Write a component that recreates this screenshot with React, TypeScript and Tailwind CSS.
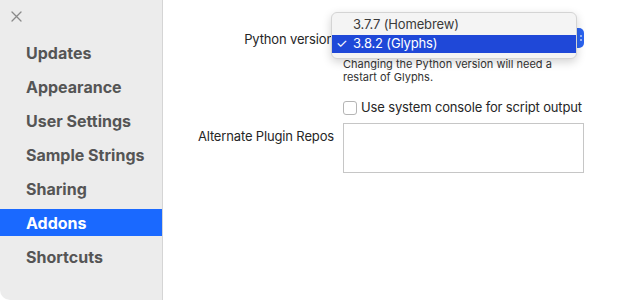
const sections = [
  "Updates",
  "Appearance",
  "User Settings",
  "Sample Strings",
  "Sharing",
  "Addons",
  "Shortcuts",
];

function CloseIcon() {
  return (
    <svg width="11" height="11" viewBox="0 0 11 11" className="text-[#8a8a8a]">
      <path d="M1 1l9 9M10 1l-9 9" stroke="currentColor" strokeWidth="1.3" strokeLinecap="round" />
    </svg>
  );
}

function PythonMenu() {
  return (
    <div className="absolute left-[168px] top-[12px] z-10 w-[246px] rounded-[6px] border border-[#d4d4d4] bg-[#f4f4f4] pb-[5px] pt-[1px] shadow-[0_3px_10px_rgba(0,0,0,0.18)]">
      <div className="flex h-[21px] items-center pl-[21px] text-[13px] text-[#3a3a3a]">3.7.7 (Homebrew)</div>
      <div className="flex h-[18px] items-center bg-[#1f48d8] text-[13px] text-white">
        <span className="w-[21px] pl-[4px] text-[13px]">✓</span>
        <span>3.8.2 (Glyphs)</span>
      </div>
    </div>
  );
}

export default function App() {
  return (
    <div className="flex h-[300px] w-[623px] bg-white font-['Inter',sans-serif] antialiased">
      <aside className="flex w-[163px] shrink-0 flex-col rounded-bl-[10px] border-r border-[#d5d5d5] bg-[#ececec]">
        <div className="px-[11px] pt-[11px]">
          <CloseIcon />
        </div>
        <nav className="mt-[17px] flex flex-col gap-[7px]">
          {sections.map((s) => (
            <div
              key={s}
              className={
                s === "Addons"
                  ? "flex h-[27px] items-center bg-[#1a69ff] pl-[26px] text-[16px] font-bold text-white"
                  : "flex h-[27px] items-center pl-[26px] text-[16px] font-bold text-[#555555]"
              }
            >
              {s}
            </div>
          ))}
        </nav>
      </aside>

      <main className="relative flex-1 pt-[28px] text-[13px] tracking-[-0.15px] text-[#262626]">
        <div className="grid grid-cols-[171px_241px] gap-x-[9px]">
          <div className="flex h-[20px] items-center justify-end pt-[4px]">Python version</div>
          <div className="flex h-[20px] justify-end rounded-[5px] bg-[#2a63f0]">
            <div className="flex w-[6px] flex-col items-center justify-center gap-[2px]">
              <span className="h-[2px] w-[2px] rounded-full bg-white/70" />
              <span className="h-[2px] w-[2px] rounded-full bg-white/70" />
            </div>
          </div>

          <div />
          <p className="mt-[10px] text-[11px] leading-[13px] tracking-normal text-[#333333]">
            Changing the Python version will need a restart of Glyphs.
          </p>

          <div />
          <label className="mt-[14px] flex items-center gap-[4px] whitespace-nowrap">
            <span className="h-[14px] w-[14px] shrink-0 rounded-[3px] border border-[#b5b5b5] bg-white" />
            <span>Use system console for script output</span>
          </label>

          <div className="mt-[5px] pt-[4px] text-right">Alternate Plugin Repos</div>
          <div className="mt-[5px] h-[50px] border border-[#c6c6c6] bg-white" />
        </div>
        <PythonMenu />
      </main>
    </div>
  );
}
